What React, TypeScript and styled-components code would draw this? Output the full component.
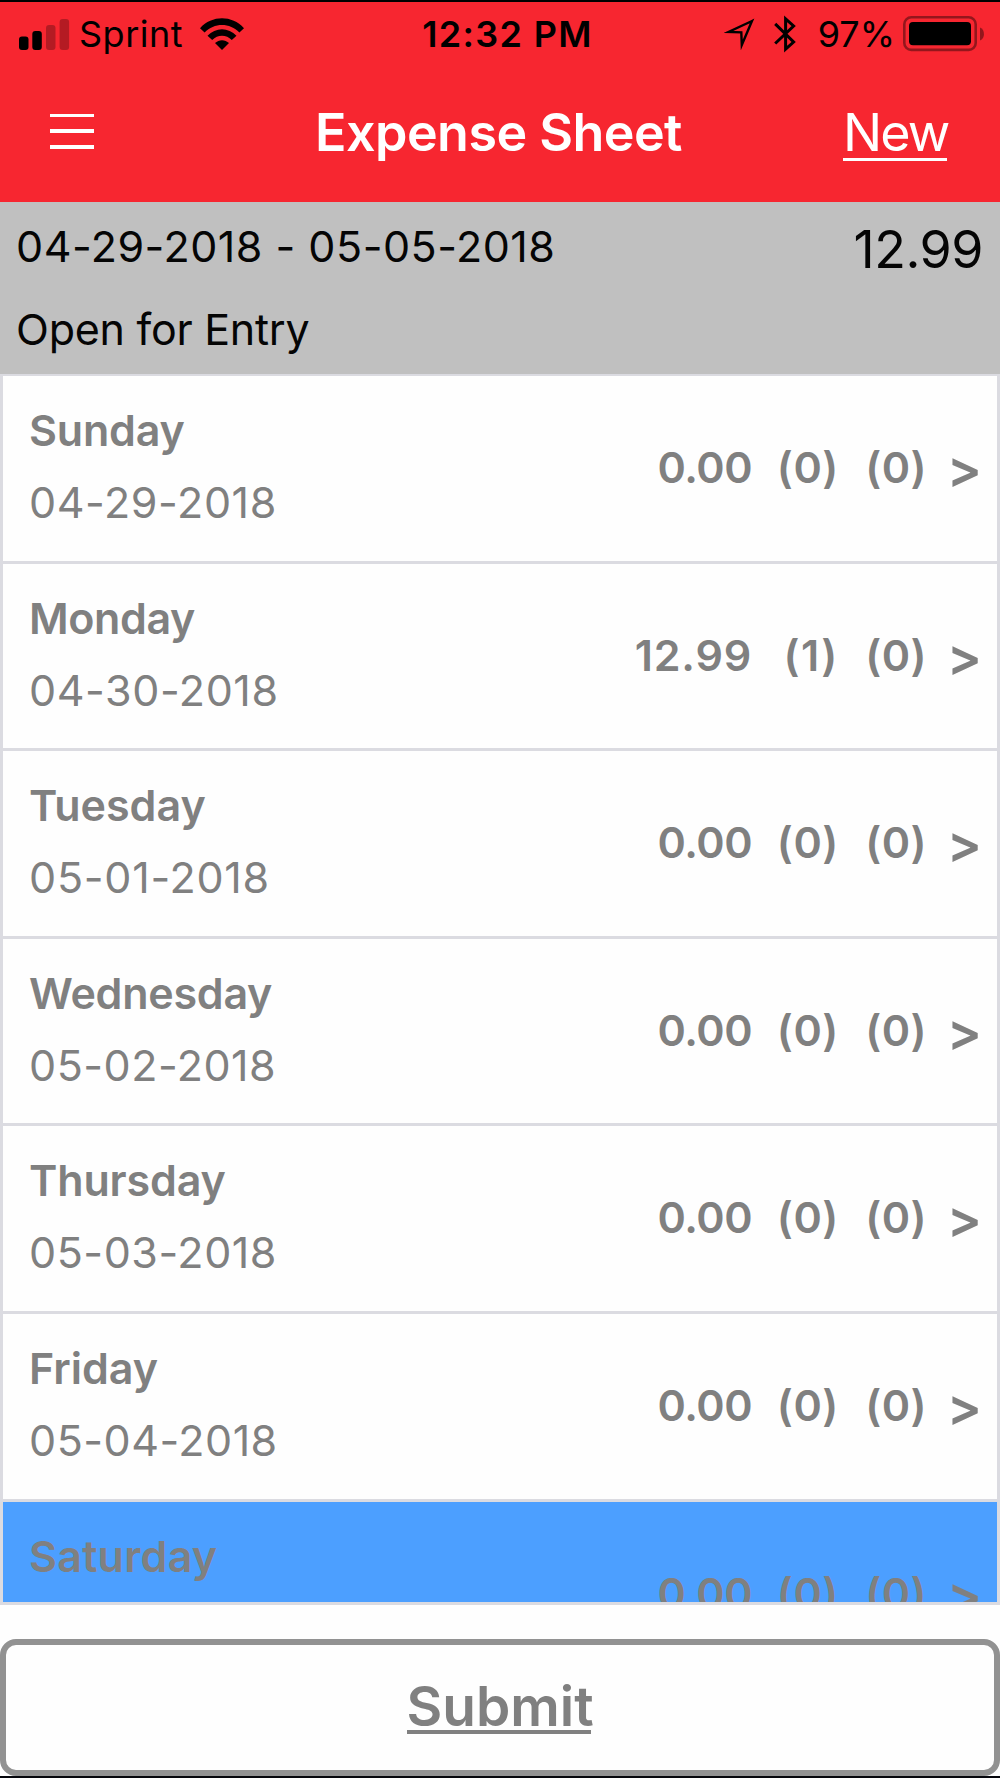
import React from "react";
import styled, { createGlobalStyle } from "styled-components";

const Global = createGlobalStyle`
  * { box-sizing: border-box; }
  html, body { margin: 0; padding: 0; background: #fefefe; }
  body { font-family: Inter, "Liberation Sans", sans-serif; font-feature-settings: "calt" 0; }
`;

const Screen = styled.div`
  width: 1000px;
  height: 1778px;
  overflow: hidden;
  display: flex;
  flex-direction: column;
  border-top: 2px solid #000;
  border-bottom: 2px solid #05060c;
  background: #fefefe;
`;

const Text = styled.span<{ $size: number; $weight?: number; $track?: number; $line?: number }>`
  font-size: ${(p) => p.$size}px;
  font-weight: ${(p) => p.$weight ?? 400};
  letter-spacing: ${(p) => p.$track ?? 0}px;
  line-height: ${(p) => p.$line ?? 60}px;
  white-space: pre;
`;

const Header = styled.header`
  height: 199.6px;
  flex: none;
  background: #f72630;
  display: flex;
  flex-direction: column;
`;

const StatusBar = styled.div`
  height: 64px;
  display: grid;
  grid-template-columns: 1fr auto 1fr;
  align-items: center;
  padding: 0 15px 0 19px;
`;

const StatusGroup = styled.div<{ $end?: boolean }>`
  display: flex;
  align-items: center;
  justify-content: ${(p) => (p.$end ? "flex-end" : "flex-start")};
`;

const Clock = styled.div`
  display: flex;
  padding-left: 11px;
`;

const Gap = styled.i<{ $w: number }>`
  width: ${(p) => p.$w}px;
  flex: none;
`;

const NavBar = styled.div`
  height: 132px;
  display: grid;
  grid-template-columns: 1fr auto 1fr;
  align-items: center;
  padding: 0 53px 0 50px;
  color: #fff;
`;

const MenuButton = styled.button`
  appearance: none;
  border: 0;
  padding: 0;
  margin-bottom: 2px;
  background: none;
  width: 44px;
  height: 35px;
  display: flex;
  flex-direction: column;
  justify-content: space-between;
`;

const MenuLine = styled.span`
  width: 44px;
  height: 3.6px;
  background: #fff;
`;

const Title = styled.h1`
  margin: 0;
  padding-top: 2px;
  display: flex;
`;

const NewLink = styled.a`
  justify-self: end;
  display: flex;
  width: 104px;
  height: 58px;
  border-bottom: 3px solid #fff;
  align-items: flex-start;
`;

const Summary = styled.section`
  height: 172.4px;
  flex: none;
  background: #c0c0c0;
  display: flex;
  justify-content: space-between;
  padding: 14.4px 17px 0 16px;
  color: #050505;
`;

const SummaryInfo = styled.div`
  display: flex;
  flex-direction: column;
  gap: 23px;
`;

const DayList = styled.main`
  height: 1231px;
  flex: none;
  overflow: hidden;
  border: 3px solid #dbdbe1;
  border-top-width: 2px;
`;

const DayRow = styled.div<{ $selected?: boolean }>`
  height: 187.6px;
  display: flex;
  justify-content: space-between;
  padding: 24px 15px 0 26px;
  border-bottom: 3px solid #dbdbe1;
  background: ${(p) => (p.$selected ? "#4c9fff" : "#fefefe")};
  color: #808080;
`;

const DayLabel = styled.div`
  display: flex;
  flex-direction: column;
  gap: 12px;
`;

const DayTotals = styled.div`
  display: grid;
  grid-template-columns: auto 87px 88px 55px;
  justify-items: end;
  align-items: start;
  padding-top: 37px;
`;

const SubmitButton = styled.button`
  appearance: none;
  flex: none;
  height: 137px;
  margin-top: 34px;
  border: 6px solid #929292;
  border-radius: 16px;
  background: #fefefe;
  color: #808080;
  font-family: inherit;
  display: flex;
  justify-content: center;
  align-items: flex-start;
  padding: 31px 3px 0 0;
`;

const SubmitLabel = styled.span`
  display: flex;
  width: 184px;
  height: 58px;
  border-bottom: 4px solid #808080;
`;

const days = [
  { name: "Sunday", date: "04-29-2018", total: "0.00", count: "(0)", nameTrack: -0.2, dateTrack: 0.6 },
  { name: "Monday", date: "04-30-2018", total: "12.99", count: "(1)", nameTrack: -0.4, dateTrack: 0.6 },
  { name: "Tuesday", date: "05-01-2018", total: "0.00", count: "(0)", nameTrack: 0, dateTrack: 0.75 },
  { name: "Wednesday", date: "05-02-2018", total: "0.00", count: "(0)", nameTrack: -0.25, dateTrack: 0.5 },
  { name: "Thursday", date: "05-03-2018", total: "0.00", count: "(0)", nameTrack: -0.15, dateTrack: 0.55 },
  { name: "Friday", date: "05-04-2018", total: "0.00", count: "(0)", nameTrack: 0, dateTrack: 0.5 },
  { name: "Saturday", date: "05-05-2018", total: "0.00", count: "(0)", nameTrack: 0.25, dateTrack: 0.5, selected: true },
];

const Signal = () => (
  <svg width="51" height="32" viewBox="0 0 51 32">
    <rect x="0" y="18.5" width="9.5" height="13.5" rx="3" />
    <rect x="13.3" y="13" width="9.5" height="19" rx="3" />
    <rect x="27" y="7" width="9.5" height="25" rx="3" opacity=".27" />
    <rect x="40.6" y="1" width="9.5" height="31" rx="3" opacity=".27" />
  </svg>
);

const Wifi = () => (
  <svg width="44" height="32" viewBox="0 0 44 32">
    <path d="M0 10.2C12-3 32-3 44 10.2L39.4 14.4C30 4.4 14 4.4 4.6 14.4Z" />
    <path d="M7.5 17.7C15.5 9 28.5 9 36.5 17.7L31.8 22C26.4 16.2 17.6 16.2 12.2 22Z" />
    <path d="M15 25.1C19 21.2 25 21.2 29 25.1L22 32Z" />
  </svg>
);

const Location = () => (
  <svg width="31" height="32" viewBox="0 0 31 32" fill="none" stroke="#000" strokeWidth="2.4">
    <path d="M28 3L4.5 14L17.3 14.3L17.8 27Z" strokeMiterlimit="10" />
  </svg>
);

const Bluetooth = () => (
  <svg width="23" height="38" viewBox="0 0 23 38" fill="none" stroke="#000" strokeWidth="3">
    <path d="M1.2 8.9L19.6 27L11.6 34.2V3.8L19.6 11L1.2 28.5" />
  </svg>
);

const Battery = () => (
  <svg width="82" height="36" viewBox="0 0 82 36">
    <rect x="1.3" y="1.3" width="71.4" height="32.6" rx="7" fill="none" stroke="#000" strokeOpacity=".4" strokeWidth="2.6" />
    <rect x="6" y="6" width="62" height="23.3" rx="4" />
    <path d="M77 11.5C82.3 13.5 82.3 22.5 77 24.5Z" opacity=".4" />
  </svg>
);

export default function App() {
  return (
    <Screen>
      <Global />
      <Header>
        <StatusBar>
          <StatusGroup>
            <Signal />
            <Gap $w={9} />
            <Text $size={36} $track={0.5}>Sprint</Text>
            <Gap $w={16.5} />
            <Wifi />
          </StatusGroup>
          <Clock>
            <Text $size={36} $weight={600} $track={1.3}>12:32 PM</Text>
          </Clock>
          <StatusGroup $end>
            <Location />
            <Gap $w={19} />
            <Bluetooth />
            <Gap $w={21} />
            <Text $size={36}>97%</Text>
            <Gap $w={8} />
            <Battery />
          </StatusGroup>
        </StatusBar>
        <NavBar>
          <MenuButton aria-label="Menu">
            <MenuLine />
            <MenuLine />
            <MenuLine />
          </MenuButton>
          <Title>
            <Text $size={52} $weight={600} $track={-0.55}>Expense Sheet</Text>
          </Title>
          <NewLink>
            <Text $size={52} $track={-1.9}>New</Text>
          </NewLink>
        </NavBar>
      </Header>
      <Summary>
        <SummaryInfo>
          <Text $size={43} $track={0.5}>04-29-2018 - 05-05-2018</Text>
          <Text $size={43} $track={-0.25}>Open for Entry</Text>
        </SummaryInfo>
        <Text $size={52} $track={-0.5} $line={67}>12.99</Text>
      </Summary>
      <DayList>
        {days.map((d) => (
          <DayRow key={d.name} $selected={d.selected}>
            <DayLabel>
              <Text $size={43} $weight={600} $track={d.nameTrack}>{d.name}</Text>
              <Text $size={43} $track={d.dateTrack}>{d.date}</Text>
            </DayLabel>
            <DayTotals>
              <Text $size={43} $weight={600} $track={d.total === "0.00" ? -0.5 : 0.8}>{d.total}</Text>
              <Text $size={43} $weight={600} $track={d.count === "(1)" ? 1.6 : 0.6}>{d.count}</Text>
              <Text $size={43} $weight={600} $track={0.4}>(0)</Text>
              <Text $size={52} $weight={600} $line={66}>&gt;</Text>
            </DayTotals>
          </DayRow>
        ))}
      </DayList>
      <SubmitButton>
        <SubmitLabel>
          <Text $size={55} $weight={600}>Submit</Text>
        </SubmitLabel>
      </SubmitButton>
    </Screen>
  );
}
